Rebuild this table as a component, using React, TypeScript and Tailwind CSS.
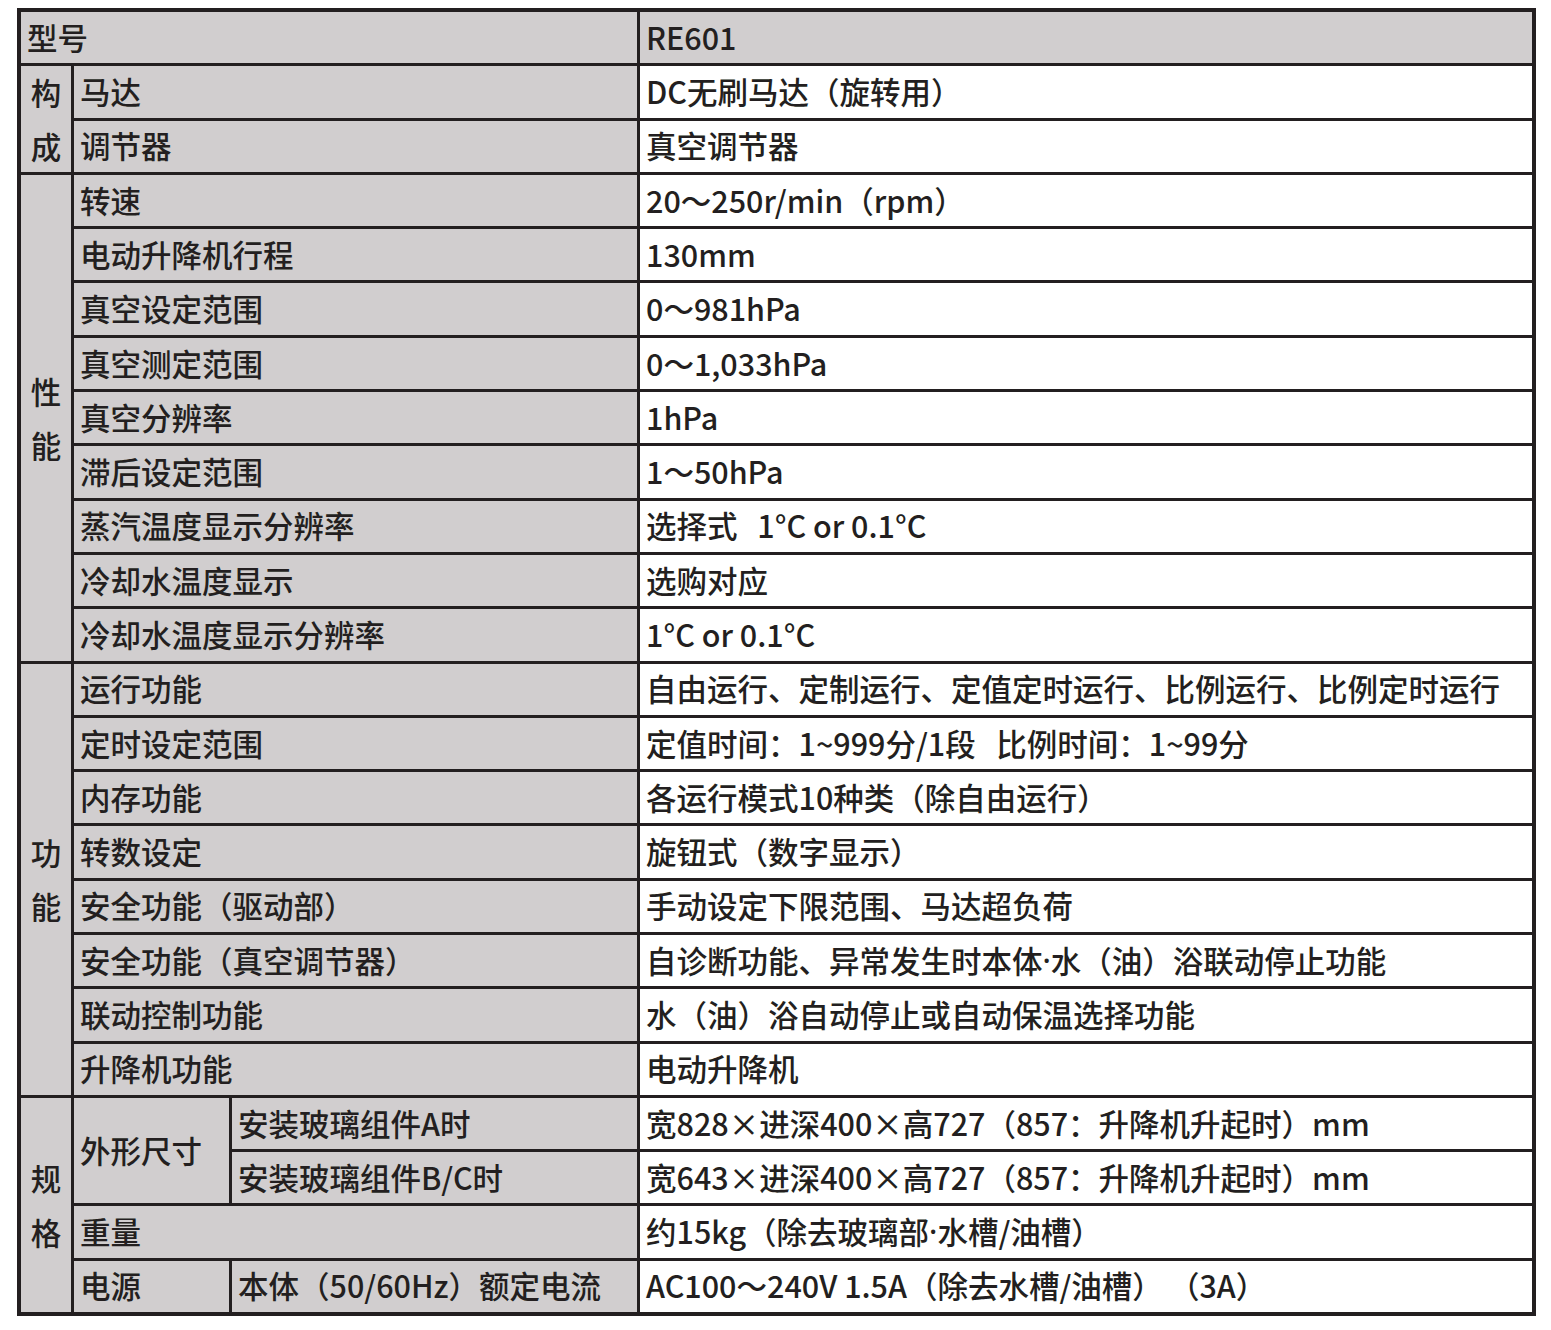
const label = "bg-[#d1cecf] flex items-center pl-[6px] whitespace-pre";
const value = "bg-white flex items-center pl-[6px] whitespace-pre";
const group = "bg-[#d1cecf] flex flex-col items-center justify-center leading-[54px]";

const Dot = () => <span className="font-['Noto_Sans',sans-serif]">·</span>;

const perf: [string, string][] = [
  ["转速", "20～250r/min（rpm）"],
  ["电动升降机行程", "130mm"],
  ["真空设定范围", "0～981hPa"],
  ["真空测定范围", "0～1,033hPa"],
  ["真空分辨率", "1hPa"],
  ["滞后设定范围", "1～50hPa"],
  ["蒸汽温度显示分辨率", "选择式  \u20091°C or 0.1°C"],
  ["冷却水温度显示", "选购对应"],
  ["冷却水温度显示分辨率", "1°C or 0.1°C"],
];

const funcs: [string, React.ReactNode][] = [
  ["运行功能", "自由运行、定制运行、定值定时运行、比例运行、比例定时运行"],
  ["定时设定范围", "定值时间：1~999分/1段   比例时间：1~99分"],
  ["内存功能", "各运行模式10种类（除自由运行）"],
  ["转数设定", "旋钮式（数字显示）"],
  ["安全功能（驱动部）", "手动设定下限范围、马达超负荷"],
  [
    "安全功能（真空调节器）",
    <>
      自诊断功能、异常发生时本体<Dot />水（油）浴联动停止功能
    </>,
  ],
  ["联动控制功能", "水（油）浴自动停止或自动保温选择功能"],
  ["升降机功能", "电动升降机"],
];

export default function App() {
  return (
    <div className="min-h-screen bg-white pt-[8px] pl-[17px] font-['Noto_Sans_CJK_SC','Noto_Sans',sans-serif] font-medium text-[30.5px] text-[#231f20]">
      <div className="grid w-[1519px] h-[1308px] grid-cols-[50px_155px_405px_892px] grid-rows-[repeat(24,1fr)] gap-[3px] p-[4px] bg-[#231f20]">
        {/* 型号 */}
        <div className={`${label} col-span-3`}>型号</div>
        <div className={label}>RE601</div>

        {/* 构成 */}
        <div className={`${group} row-span-2`}>
          <span>构</span>
          <span>成</span>
        </div>
        <div className={`${label} col-span-2`}>马达</div>
        <div className={value}>DC无刷马达（旋转用）</div>
        <div className={`${label} col-span-2`}>调节器</div>
        <div className={value}>真空调节器</div>

        {/* 性能 */}
        <div className={`${group} row-span-9`}>
          <span>性</span>
          <span>能</span>
        </div>
        {perf.map(([k, v]) => (
          <div key={k} className="contents">
            <div className={`${label} col-span-2`}>{k}</div>
            <div className={value}>{v}</div>
          </div>
        ))}

        {/* 功能 */}
        <div className={`${group} row-span-8`}>
          <span>功</span>
          <span>能</span>
        </div>
        {funcs.map(([k, v]) => (
          <div key={k} className="contents">
            <div className={`${label} col-span-2`}>{k}</div>
            <div className={value}>{v}</div>
          </div>
        ))}

        {/* 规格 */}
        <div className={`${group} row-span-4`}>
          <span>规</span>
          <span>格</span>
        </div>
        <div className={`${label} row-span-2`}>外形尺寸</div>
        <div className={label}>安装玻璃组件A时</div>
        <div className={value}>宽828×进深400×高727（857：升降机升起时）mm</div>
        <div className={label}>安装玻璃组件B/C时</div>
        <div className={value}>宽643×进深400×高727（857：升降机升起时）mm</div>
        <div className={`${label} col-span-2`}>重量</div>
        <div className={value}>
          约15kg（除去玻璃部<Dot />水槽/油槽）
        </div>
        <div className={label}>电源</div>
        <div className={label}>本体（50/60Hz）额定电流</div>
        <div className={value}>AC100～240V 1.5A（除去水槽/油槽）{"\u2009"}（3A）</div>
      </div>
    </div>
  );
}
